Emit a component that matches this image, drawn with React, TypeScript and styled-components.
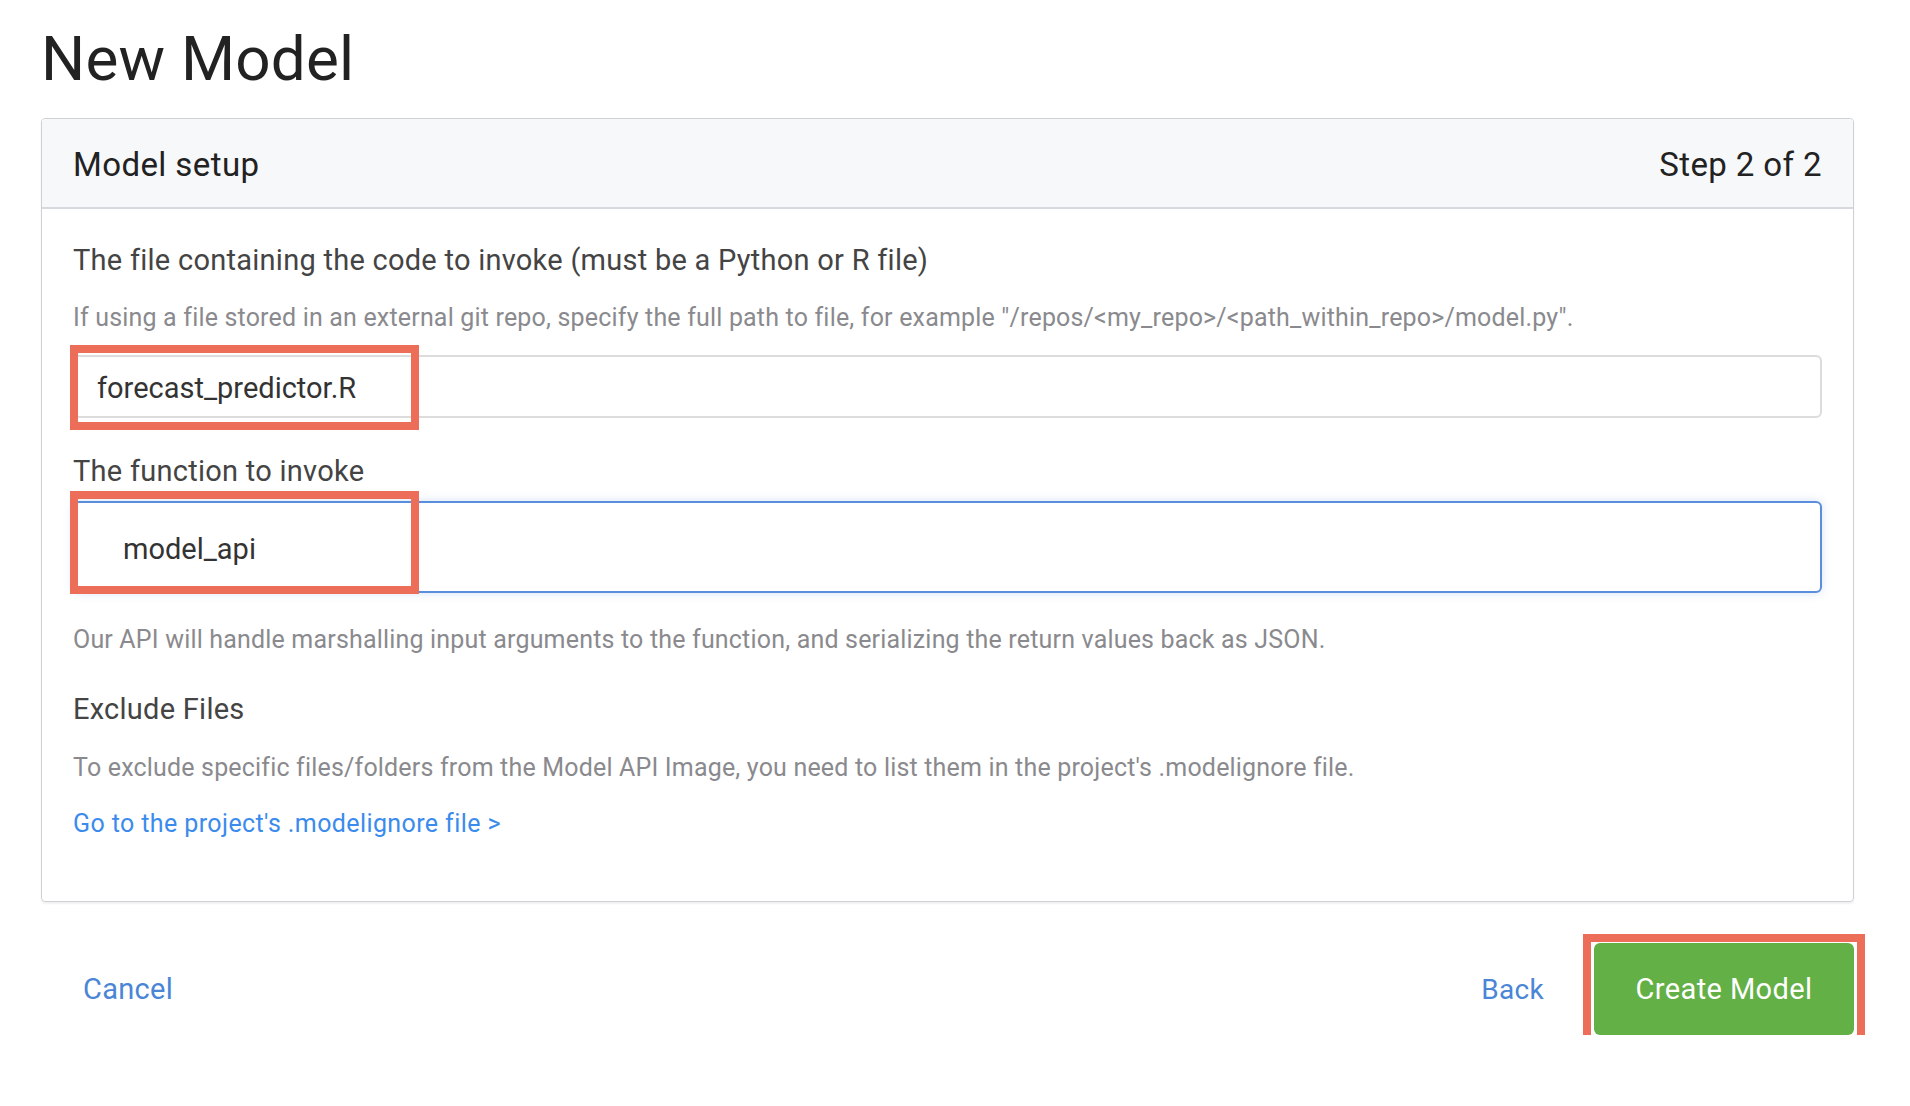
import React from "react";
import styled, { createGlobalStyle } from "styled-components";

const GlobalStyle = createGlobalStyle`
  html, body {
    margin: 0;
    padding: 0;
    background: #ffffff;
    font-family: Roboto, "Liberation Sans", Arial, sans-serif;
  }
  * { box-sizing: border-box; }
`;

const Page = styled.div`
  width: 1813px;
  margin-left: 41px;
  padding-top: 22px;
`;

const Title = styled.h1`
  margin: 0 0 22px 0;
  font-size: 62px;
  line-height: 74px;
  font-weight: 400;
  letter-spacing: 0.2px;
  color: #222;
`;

const Card = styled.section`
  border: 1px solid #cdd1d6;
  border-radius: 4px;
  box-shadow: 0 2px 2px rgba(0, 0, 0, 0.06);
  overflow: hidden;
`;

const CardHeader = styled.header`
  height: 90px;
  padding: 2px 31px 0;
  display: flex;
  align-items: center;
  justify-content: space-between;
  background: #f7f8fa;
  border-bottom: 2px solid #d6d9dd;
  font-size: 33px;
  letter-spacing: 0.4px;
  color: #222;
`;

const CardBody = styled.div`
  padding: 33px 31px 61px;
  display: flex;
  flex-direction: column;
`;

const Label = styled.div<{ $top?: number }>`
  margin-top: ${(p) => p.$top ?? 0}px;
  font-size: 29px;
  line-height: 36px;
  letter-spacing: 0.26px;
  color: #444;
`;

const Help = styled.div<{ $top?: number; $link?: boolean }>`
  margin-top: ${(p) => p.$top ?? 0}px;
  font-size: 25px;
  line-height: 32px;
  letter-spacing: ${(p) => (p.$link ? 0.4 : 0.18)}px;
  color: ${(p) => (p.$link ? "#3a8bec" : "#8a8a8e")};
  cursor: ${(p) => (p.$link ? "pointer" : "default")};
`;

const Field = styled.div<{ $top: number }>`
  position: relative;
  margin-top: ${(p) => p.$top}px;
`;

const Input = styled.div<{ $focused?: boolean; $height: number; $indent: number }>`
  height: ${(p) => p.$height}px;
  display: flex;
  align-items: center;
  padding-left: ${(p) => p.$indent}px;
  padding-top: 3px;
  border: 2px solid ${(p) => (p.$focused ? "#5a8ddb" : "#dcdcdc")};
  border-radius: 6px;
  background: #fff;
  box-shadow: ${(p) => (p.$focused ? "0 0 10px rgba(90, 141, 219, 0.25)" : "none")};
  font-size: 29px;
  color: #333;
`;

const Highlight = styled.div<{ $top: number; $bottom: number; $left: number; $width?: number; $right?: number }>`
  position: absolute;
  top: ${(p) => p.$top}px;
  bottom: ${(p) => p.$bottom}px;
  left: ${(p) => p.$left}px;
  ${(p) => (p.$width !== undefined ? `width: ${p.$width}px;` : "")}
  ${(p) => (p.$right !== undefined ? `right: ${p.$right}px;` : "")}
  border: 8px solid #ec6d58;
  pointer-events: none;
`;

const Footer = styled.footer`
  display: flex;
  align-items: center;
  margin-top: 41px;
  padding-left: 42px;
`;

const TextButton = styled.button<{ $size: number }>`
  border: none;
  background: none;
  padding: 0;
  font-family: inherit;
  font-size: ${(p) => p.$size}px;
  letter-spacing: 0.3px;
  color: #4a85d6;
  cursor: pointer;
`;

const Spacer = styled.div`
  flex: 1;
`;

const PrimaryWrap = styled.div`
  position: relative;
  margin-left: 50px;
`;

const PrimaryButton = styled.button`
  width: 260px;
  height: 92px;
  border: none;
  border-radius: 6px;
  background: #62b046;
  color: #fff;
  font-family: inherit;
  font-size: 29px;
  letter-spacing: 0.4px;
  cursor: pointer;
`;

const App = () => {
  return (
    <>
      <GlobalStyle />
      <Page>
        <Title>New Model</Title>
        <Card>
          <CardHeader>
            <span>Model setup</span>
            <span>Step 2 of 2</span>
          </CardHeader>
          <CardBody>
            <Label>The file containing the code to invoke (must be a Python or R file)</Label>
            <Help $top={24}>
              If using a file stored in an external git repo, specify the full path to file, for example
              "/repos/&lt;my_repo&gt;/&lt;path_within_repo&gt;/model.py".
            </Help>
            <Field $top={21}>
              <Input $height={63} $indent={22}>forecast_predictor.R</Input>
              <Highlight $top={-10} $bottom={-12} $left={-3} $width={349} />
            </Field>
            <Label $top={35}>The function to invoke</Label>
            <Field $top={12}>
              <Input $focused $height={92} $indent={48}>model_api</Input>
              <Highlight $top={-10} $bottom={-1} $left={-3} $width={349} />
            </Field>
            <Help $top={31}>
              Our API will handle marshalling input arguments to the function, and serializing the return
              values back as JSON.
            </Help>
            <Label $top={35}>Exclude Files</Label>
            <Help $top={25}>
              To exclude specific files/folders from the Model API Image, you need to list them in the
              project's .modelignore file.
            </Help>
            <Help $top={24} $link>
              Go to the project's .modelignore file &gt;
            </Help>
          </CardBody>
        </Card>
        <Footer>
          <TextButton $size={29}>Cancel</TextButton>
          <Spacer />
          <TextButton $size={28}>Back</TextButton>
          <PrimaryWrap>
            <PrimaryButton>Create Model</PrimaryButton>
            <Highlight $top={-9} $bottom={-10} $left={-11} $right={-11} />
          </PrimaryWrap>
        </Footer>
      </Page>
    </>
  );
};

export default App;
